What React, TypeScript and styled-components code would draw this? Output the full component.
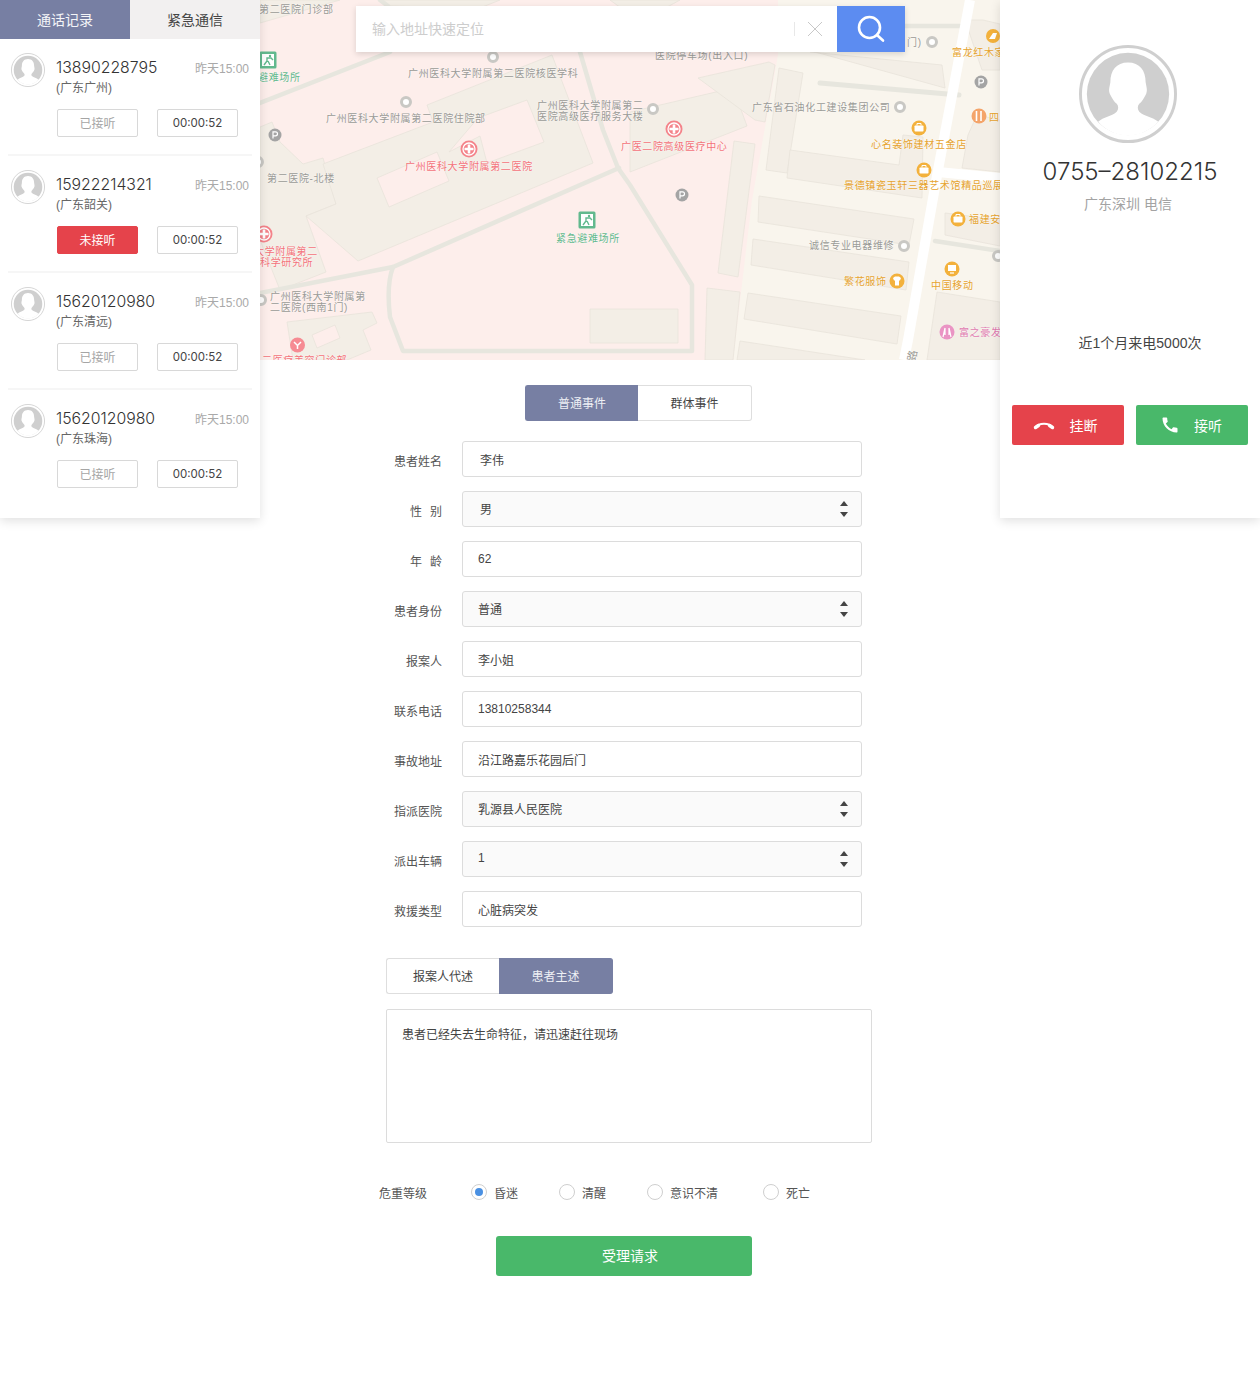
import React from "react";
import styled, { createGlobalStyle } from "styled-components";
import { MdCall } from "react-icons/md";

const Global = createGlobalStyle`
  html, body { margin: 0; padding: 0; background: #fff; }
  body { font-family: "Liberation Sans", "Noto Sans CJK SC", sans-serif; color: #444; }
  * { box-sizing: border-box; }
`;

const Page = styled.div`
  width: 1260px;
  min-height: 1380px;
  display: grid;
  grid-template-columns: 260px 740px 260px;
  align-items: start;
`;

const Panel = styled.aside`
  position: relative;
  z-index: 2;
  height: 518px;
  background: #fff;
  box-shadow: 0 3px 10px rgba(0, 0, 0, 0.12);
`;

const PanelTabs = styled.div`
  display: grid;
  grid-template-columns: 130px 130px;
  height: 39px;
`;

const PanelTab = styled.div<{ $active?: boolean }>`
  display: flex;
  align-items: center;
  justify-content: center;
  padding-bottom: 2px;
  font-size: 14px;
  color: ${(p) => (p.$active ? "#f4f5f8" : "#444")};
  background: ${(p) => (p.$active ? "#777fa3" : "#f2f0f0")};
`;

const CallRow = styled.div`
  height: 117px;
  margin: 0 8px;
  padding: 14px 3px 0 3px;
  border-bottom: 2px solid #f6f6f6;
  &:last-child { border-bottom: 0; }
`;

const CallTop = styled.div`
  display: flex;
  gap: 11px;
`;

const CallInfo = styled.div`
  flex: 1;
`;

const CallHead = styled.div`
  display: flex;
  justify-content: space-between;
  align-items: center;
  height: 28px;
`;

const Phone = styled.span`
  font-family: Inter, "Liberation Sans", sans-serif;
  font-weight: 300;
  font-size: 15.8px;
  color: #333;
`;

const When = styled.span`
  font-size: 12px;
  color: #a9a9a9;
`;

const Region = styled.div`
  font-size: 12px;
  line-height: 14px;
  color: #666;
`;

const CallButtons = styled.div`
  display: flex;
  gap: 19px;
  margin: 14px 0 0 46px;
`;

const Chip = styled.div<{ $tone?: "muted" | "alert" }>`
  width: 81px;
  height: 28px;
  display: flex;
  align-items: center;
  justify-content: center;
  padding-bottom: 1px;
  font-size: 12px;
  border-radius: 2px;
  border: 1px solid ${(p) => (p.$tone === "alert" ? "#e5434b" : "#d8d8d8")};
  background: ${(p) => (p.$tone === "alert" ? "#e5434b" : "#fff")};
  color: ${(p) => (p.$tone === "alert" ? "#fff" : p.$tone === "muted" ? "#a5a5a5" : "#444")};
`;

const TimerChip = styled(Chip)`
  font-family: Inter, "Liberation Sans", sans-serif;
  font-size: 11.5px;
`;

const AvatarSvg = styled.svg<{ $size: number; $shift?: number }>`
  display: block;
  flex: none;
  width: ${(p) => p.$size}px;
  height: ${(p) => p.$size}px;
  margin-right: ${(p) => p.$shift ?? 0}px;
`;

function Avatar({ size, ring, shift }: { size: number; ring: number; shift?: number }) {
  return (
    <AvatarSvg $size={size} $shift={shift} viewBox="0 0 100 100">
      <circle cx="50" cy="50" r={50 - ring / 2} fill="#fff" stroke="#cfcfcf" strokeWidth={ring} />
      <circle cx="50" cy="50" r="42" fill="#cfcfcf" />
      <path
        fill="#fff"
        d="M50 17.8C38 17.8 32 26 32 38C31 44 30 46 31.5 50C34 55 36 58 38.5 60C40.5 62 40.5 66 38.5 68C33 73 25 73 19.5 78.4C27 87 38 92.5 50 92.5C62 92.5 73 87 81 78.4C75 73 67 73 61.5 68C59.5 66 59.5 62 61.5 60C64 58 66 55 68.5 50C70 46 69 44 68 38C68 26 62 17.8 50 17.8Z"
      />
    </AvatarSvg>
  );
}

const Center = styled.main`
  min-width: 0;
`;

const MapCanvas = styled.div`
  position: relative;
  height: 360px;
  overflow: hidden;
  background: #fdeeeb;
`;

const MapArt = styled.svg`
  position: absolute;
  inset: 0;
  width: 740px;
  height: 360px;
  filter: blur(0.3px);
`;

const MapLabel = styled.span<{ $x: number; $y: number; $c: string }>`
  position: absolute;
  left: ${(p) => p.$x - 260}px;
  top: ${(p) => p.$y - 5}px;
  font-size: 10px;
  line-height: 11px;
  letter-spacing: 0.65px;
  white-space: pre;
  color: ${(p) => p.$c};
  text-shadow: 0 0 2px #fff;
`;

const VerticalLabel = styled(MapLabel)`
  font-size: 11px;
  transform: rotate(-80deg);
`;

const SearchBar = styled.div`
  position: absolute;
  left: 96px;
  top: 6px;
  width: 549px;
  height: 46px;
  display: flex;
  align-items: center;
  background: #fff;
  box-shadow: 0 2px 6px rgba(0, 0, 0, 0.14);
`;

const SearchHint = styled.div`
  flex: 1;
  padding: 0 0 2px 16px;
  font-size: 14px;
  color: #cdcdcd;
`;

const SearchDivider = styled.i`
  width: 1px;
  height: 14px;
  background: #e8e8e8;
`;

const ClearIcon = styled.svg`
  width: 16px;
  height: 16px;
  margin: 0 14px 0 12px;
`;

const SearchBtn = styled.div`
  width: 68px;
  height: 46px;
  display: flex;
  align-items: center;
  justify-content: center;
  background: #5c8cf1;
`;

const SearchGlyph = styled.svg`
  width: 28px;
  height: 28px;
`;

const EventTabs = styled.div<{ $left: number }>`
  display: flex;
  width: 227px;
  height: 36px;
  margin-left: ${(p) => p.$left}px;
`;

const EventTab = styled.div<{ $active?: boolean; $side: "l" | "r" }>`
  width: ${(p) => (p.$side === "l" ? 113 : 114)}px;
  display: flex;
  align-items: center;
  justify-content: center;
  padding-bottom: 2px;
  font-size: 12px;
  background: ${(p) => (p.$active ? "#777fa3" : "#fff")};
  color: ${(p) => (p.$active ? "#eef0f5" : "#444")};
  border: 1px solid ${(p) => (p.$active ? "#777fa3" : "#dedede")};
  ${(p) => (p.$side === "l" ? "border-right: 0;" : "border-left: 0;")}
  border-radius: ${(p) => (p.$side === "l" ? "3px 0 0 3px" : "0 3px 3px 0")};
`;

const FormArea = styled.section`
  padding-top: 25px;
`;

const Rows = styled.div`
  display: flex;
  flex-direction: column;
  gap: 14px;
  margin: 20px 0 0 120px;
`;

const FormRow = styled.div`
  display: grid;
  grid-template-columns: 62px 400px;
  column-gap: 20px;
  align-items: center;
`;

const FieldLabel = styled.label`
  text-align: right;
  font-size: 12px;
  word-spacing: 0.7px;
  padding-top: 2px;
  color: #555;
  white-space: pre;
`;

const Field = styled.div<{ $select?: boolean; $inset?: boolean }>`
  position: relative;
  height: 36px;
  display: flex;
  align-items: center;
  padding-left: ${(p) => (p.$inset ? 17 : 15)}px;
  padding-bottom: ${(p) => (p.$select ? 2 : 0)}px;
  font-size: 12px;
  color: #444;
  border: 1px solid #dcdcdc;
  border-radius: 3px;
  background: ${(p) => (p.$select ? "#fafafa" : "#fff")};
`;

const Updown = styled.span`
  position: absolute;
  right: 12px;
  top: 9px;
  width: 9px;
  height: 16px;
  &::before, &::after {
    content: "";
    position: absolute;
    left: 0;
    border-left: 4.5px solid transparent;
    border-right: 4.5px solid transparent;
  }
  &::before { top: 0; border-bottom: 5px solid #444; }
  &::after { bottom: 0; border-top: 5px solid #444; }
`;

const NoteBlock = styled.div`
  margin: 31px 0 0 126px;
`;

const NoteBox = styled.div`
  width: 486px;
  height: 134px;
  margin-top: 15px;
  padding: 16px 15px;
  font-size: 12px;
  line-height: 18px;
  color: #444;
  border: 1px solid #dcdcdc;
  border-radius: 2px;
`;

const Severity = styled.div`
  display: flex;
  align-items: center;
  margin: 40px 0 0 119px;
  height: 18px;
  font-size: 12px;
  color: #555;
`;

const SeverityTitle = styled.span`
  width: 92px;
`;

const RadioItem = styled.span<{ $w: number }>`
  display: flex;
  align-items: center;
  gap: 7px;
  width: ${(p) => p.$w}px;
`;

const RadioDot = styled.i<{ $on?: boolean }>`
  position: relative;
  width: 16px;
  height: 16px;
  border-radius: 50%;
  border: 1px solid #cfcfcf;
  background: #fff;
  ${(p) =>
    p.$on
      ? `&::after { content: ""; position: absolute; left: 3px; top: 3px; width: 8px; height: 8px; border-radius: 50%; background: #4a90e2; }`
      : ""}
`;

const SubmitBtn = styled.div`
  width: 256px;
  height: 40px;
  margin: 35px 0 0 236px;
  padding: 0 0 2px 12px;
  display: flex;
  align-items: center;
  justify-content: center;
  font-size: 14px;
  color: #fff;
  background: #49b86a;
  border-radius: 3px;
`;

const RightBody = styled.div`
  display: flex;
  flex-direction: column;
  align-items: center;
  padding-top: 45px;
`;

const BigNumber = styled.div`
  margin-top: 12px;
  font-family: Inter, "Liberation Sans", sans-serif;
  font-weight: 300;
  font-size: 24px;
  line-height: 34px;
  color: #333;
`;

const Carrier = styled.div`
  margin: 5px 4px 0 0;
  font-size: 14px;
  line-height: 20px;
  color: #a3a3a3;
`;

const Frequency = styled.div`
  margin: 119px 0 0 20px;
  font-size: 14px;
  line-height: 20px;
  color: #444;
`;

const CallActions = styled.div`
  display: grid;
  grid-template-columns: 112px 112px;
  gap: 12px;
  margin-top: 52px;
`;

const CallAction = styled.div<{ $kind: "end" | "accept" }>`
  height: 40px;
  display: flex;
  align-items: center;
  justify-content: center;
  gap: ${(p) => (p.$kind === "end" ? 15 : 14)}px;
  padding-right: ${(p) => (p.$kind === "end" ? 6 : 2)}px;
  font-size: 14px;
  color: #fff;
  border-radius: 2px;
  background: ${(p) => (p.$kind === "end" ? "#e5434b" : "#49b86a")};
`;

const HangUpGlyph = styled.svg`
  width: 22px;
  height: 10px;
`;

const calls = [
  { phone: "13890228795", region: "(广东广州)", state: "已接听" },
  { phone: "15922214321", region: "(广东韶关)", state: "未接听", missed: true },
  { phone: "15620120980", region: "(广东清远)", state: "已接听" },
  { phone: "15620120980", region: "(广东珠海)", state: "已接听" },
];

const fields = [
  { label: "患者姓名", value: "李伟", inset: true },
  { label: "性  别", value: "男", select: true, inset: true },
  { label: "年  龄", value: "62" },
  { label: "患者身份", value: "普通", select: true },
  { label: "报案人", value: "李小姐" },
  { label: "联系电话", value: "13810258344" },
  { label: "事故地址", value: "沿江路嘉乐花园后门" },
  { label: "指派医院", value: "乳源县人民医院", select: true },
  { label: "派出车辆", value: "1", select: true },
  { label: "救援类型", value: "心脏病突发" },
];

const G = "#9a9a96";
const R = "#f4727a";
const Gn = "#63b98d";
const O = "#e6a32e";
const Pk = "#e07ab0";

const labels: [string, number, number, string][] = [
  ["第二医院门诊部", 259, 9, G],
  ["避难场所", 258, 77, Gn],
  ["广州医科大学附属第二医院核医学科", 408, 73, G],
  ["广州医科大学附属第二医院住院部", 326, 118, G],
  ["广州医科大学附属第二\n医院高级医疗服务大楼", 537, 105, G],
  ["广州医科大学附属第二医院", 405, 166, R],
  ["第二医院-北楼", 267, 178, G],
  ["紧急避难场所", 556, 238, Gn],
  ["大学附属第二", 254, 251, R],
  ["科学研究所", 260, 262, R],
  ["广州医科大学附属第\n二医院(西南1门)", 270, 296, G],
  ["二医疗美容门诊部", 262, 360, R],
  ["医院停车场(出入口)", 655, 55, G],
  ["广东省石油化工建设集团公司", 752, 107, G],
  ["广医二院高级医疗中心", 621, 146, R],
  ["心名装饰建材五金店", 871, 144, O],
  ["景德镇瓷玉轩三器艺术馆精品巡展", 844, 185, O],
  ["福建安", 969, 219, O],
  ["诚信专业电器维修", 809, 245, G],
  ["繁花服饰", 844, 281, O],
  ["中国移动", 931, 285, O],
  ["富之豪发", 959, 332, Pk],
  ["富龙红木家", 952, 52, O],
  ["四", 989, 117, O],
  ["门)", 907, 42, G],
];

const blocks = [
  "260,23 340,0 260,0",
  "380,0 500,0 480,8 390,6",
  "260,127 272,122 280,142 303,164 323,158 336,204 306,216 326,272 280,290 260,240",
  "323,164 433,122 427,105 552,55 593,163 358,261 306,216 336,204",
  "287,322 372,312 377,323 363,330 371,350 347,360 293,360",
  "610,0 640,22 680,0",
  "630,112 733,88 747,126 630,172",
  "698,78 769,62 775,65 765,122 755,120",
  "779,68 803,73 787,173 766,170",
  "734,141 755,144 738,277 718,273",
  "707,288 740,292 733,360 705,360",
  "590,309 678,309 678,343 590,343",
  "808,50 945,88 942,65 810,52",
  "903,135 923,137 922,198 787,178 790,150 899,165",
  "759,196 914,219 909,245 758,222",
  "753,239 909,262 906,290 751,265",
  "748,293 901,316 897,344 744,319",
  "740,341 865,360 737,360",
  "965,20 983,20 1000,24 1000,70 982,70",
  "968,135 977,115 1000,120 1000,172 962,168",
  "945,213 1000,220 1000,246 945,235",
  "937,292 1000,302 1000,360 927,360",
];

const lightBeige = "M778 0H1000V360H733L752 200L778 55Z";

function Ring({ x, y }: { x: number; y: number }) {
  return <circle cx={x} cy={y} r="4.5" fill="#fff" stroke="#c9c8c4" strokeWidth="3" />;
}

function Park({ x, y }: { x: number; y: number }) {
  return (
    <g>
      <circle cx={x} cy={y} r="6.5" fill="#a4a4a4" />
      <path
        d={`M${x - 2} ${y + 3.5}V${y - 3.2}H${x + 0.5}a2 2 0 0 1 0 4H${x - 2}`}
        fill="none"
        stroke="#fff"
        strokeWidth="1.2"
      />
    </g>
  );
}

function Hospital({ x, y }: { x: number; y: number }) {
  return (
    <g>
      <circle cx={x} cy={y} r="8.5" fill="#f4838a" />
      <circle cx={x} cy={y} r="6" fill="none" stroke="#fff" strokeWidth="1.3" />
      <path d={`M${x - 4.5} ${y}H${x + 4.5}M${x} ${y - 4.5}V${y + 4.5}`} stroke="#fff" strokeWidth="2.6" />
    </g>
  );
}

function Exit({ x, y }: { x: number; y: number }) {
  return (
    <g>
      <rect x={x - 8.5} y={y - 8.5} width="17" height="17" rx="1.5" fill="#62b98e" />
      <rect x={x - 6} y={y - 6} width="12" height="12" fill="#fff" />
      <path
        d={`M${x - 4} ${y + 5}L${x - 1} ${y + 1}L${x - 1} ${y - 2}L${x + 3} ${y - 2}L${x + 5} ${y}M${x} ${y + 1}L${x + 2} ${y + 5}`}
        fill="none"
        stroke="#62b98e"
        strokeWidth="1.4"
      />
      <circle cx={x + 2} cy={y - 4} r="1.2" fill="#62b98e" />
    </g>
  );
}

function Shop({ x, y }: { x: number; y: number }) {
  return (
    <g>
      <circle cx={x} cy={y} r="7.5" fill="#f3b13c" />
      <rect x={x - 4.5} y={y - 2.5} width="9" height="6" rx="0.8" fill="#fff" />
      <path d={`M${x - 2} ${y - 2.5}V${y - 4.5}H${x + 2}V${y - 2.5}`} fill="none" stroke="#fff" strokeWidth="1" />
    </g>
  );
}

function MapDrawing() {
  return (
    <MapArt viewBox="260 0 740 360">
      <rect x="260" y="0" width="740" height="360" fill="#fdeeeb" />
      <path d={lightBeige} fill="#f9f5ed" />
      {blocks.map((pts) => (
        <polygon key={pts} points={pts} fill="#f3eee6" stroke="#e8e3da" strokeWidth="0.8" />
      ))}
      <polygon points="377,178 437,152 449,181 389,207" fill="#fdeeeb" stroke="#e8e3da" strokeWidth="0.8" />
      <polygon points="478,118 527,100 544,142 487,163 480,136 449,152" fill="#fdeeeb" stroke="#e8e3da" strokeWidth="0.8" />
      <polygon points="312,335 335,325 340,338 317,348" fill="#fdeeeb" stroke="#e8e3da" strokeWidth="0.8" />
      <g fill="none" stroke="#e7e6de" strokeWidth="4.5" strokeLinejoin="round" strokeLinecap="round">
        <path d="M260 103L390 52" />
        <path d="M260 293L393 267L619 168" />
        <path d="M393 267C388 280 388 300 390 317L403 351H692V285L630 185L618 168L603 130L580 52" />
        <path d="M380 0L388 6" />
        <path d="M820 83L959 95" strokeWidth="5" />
        <path d="M905 26H960" />
        <path d="M935 241L1000 251" />
      </g>
      <g fill="none" stroke="#fff" strokeWidth="10">
        <path d="M970 0L938 170L908 340L904 360" />
        <path d="M938 172L1000 178" />
      </g>
      {[
        [493, 57],
        [406, 102],
        [261, 300],
        [653, 109],
        [900, 107],
        [932, 42],
        [904, 246],
        [998, 256],
        [258, 162],
      ].map(([x, y]) => (
        <Ring key={`${x}-${y}`} x={x} y={y} />
      ))}
      <Park x={275} y={135} />
      <Park x={682} y={195} />
      <Park x={981} y={82} />
      <Hospital x={469} y={149} />
      <Hospital x={264} y={234} />
      <Hospital x={674} y={129} />
      <circle cx="297.500" cy="345" r="7.5" fill="#f68b93" />
      <path d="M294 342l3.500 3.500 3.500-3.500M297.500 345v4" fill="none" stroke="#fff" strokeWidth="1.5" />
      <Exit x={587} y={220} />
      <Exit x={268} y={60} />
      <Shop x={919} y={128} />
      <Shop x={924} y={170} />
      <Shop x={958} y={219} />
      <circle cx="952" cy="269" r="7.5" fill="#f3b13c" />
      <rect x="948" y="265" width="8" height="6" fill="#fff" />
      <path d="M950 273H954" stroke="#fff" strokeWidth="1.2" />
      <circle cx="897" cy="281" r="7.500" fill="#f3b13c" />
      <path d="M893 278L895 276.500H899L901 278L900 280.500H899V285.500H895V280.500H894Z" fill="#fff" />
      <circle cx="993" cy="36" r="7" fill="#f3b13c" />
      <path d="M989 39L993 33L997 33L995 39Z" fill="#fff" />
      <circle cx="979" cy="116" r="7.500" fill="#f4a46a" />
      <path d="M976.500 111V121M981 111V121" stroke="#fff" strokeWidth="1.6" />
      <circle cx="947" cy="332" r="7.500" fill="#ea94c4" />
      <path d="M945 328L943 337M949 328L951 337M945 328V335M949 328V335" stroke="#fff" strokeWidth="1.2" fill="none" />
    </MapArt>
  );
}

export default function App() {
  return (
    <Page>
      <Global />
      <Panel>
        <PanelTabs>
          <PanelTab $active>通话记录</PanelTab>
          <PanelTab>紧急通信</PanelTab>
        </PanelTabs>
        {calls.map((c, i) => (
          <CallRow key={i}>
            <CallTop>
              <Avatar size={34} ring={2.5} />
              <CallInfo>
                <CallHead>
                  <Phone>{c.phone}</Phone>
                  <When>昨天15:00</When>
                </CallHead>
                <Region>{c.region}</Region>
              </CallInfo>
            </CallTop>
            <CallButtons>
              <Chip $tone={c.missed ? "alert" : "muted"}>{c.state}</Chip>
              <TimerChip>00:00:52</TimerChip>
            </CallButtons>
          </CallRow>
        ))}
      </Panel>

      <Center>
        <MapCanvas>
          <MapDrawing />
          {labels.map(([t, x, y, c]) => (
            <MapLabel key={t} $x={x} $y={y} $c={c}>
              {t}
            </MapLabel>
          ))}
          <VerticalLabel $x={907} $y={355} $c={G}>
            路
          </VerticalLabel>
          <SearchBar>
            <SearchHint>输入地址快速定位</SearchHint>
            <SearchDivider />
            <ClearIcon viewBox="0 0 16 16">
              <path d="M1 1L15 15M15 1L1 15" stroke="#c8c8c8" strokeWidth="1" />
            </ClearIcon>
            <SearchBtn>
              <SearchGlyph viewBox="0 0 28 28">
                <circle cx="12.500" cy="12.500" r="10.500" fill="none" stroke="#fff" strokeWidth="2.6" />
                <path d="M20 20L26 25.500" stroke="#fff" strokeWidth="2.6" strokeLinecap="round" />
              </SearchGlyph>
            </SearchBtn>
          </SearchBar>
        </MapCanvas>

        <FormArea>
          <EventTabs $left={265}>
            <EventTab $active $side="l">普通事件</EventTab>
            <EventTab $side="r">群体事件</EventTab>
          </EventTabs>
          <Rows>
            {fields.map((f) => (
              <FormRow key={f.label}>
                <FieldLabel>{f.label}</FieldLabel>
                <Field $select={f.select} $inset={f.inset}>
                  {f.value}
                  {f.select && <Updown />}
                </Field>
              </FormRow>
            ))}
          </Rows>
          <NoteBlock>
            <EventTabs $left={0}>
              <EventTab $side="l">报案人代述</EventTab>
              <EventTab $active $side="r">患者主述</EventTab>
            </EventTabs>
            <NoteBox>患者已经失去生命特征，请迅速赶往现场</NoteBox>
          </NoteBlock>
          <Severity>
            <SeverityTitle>危重等级</SeverityTitle>
            <RadioItem $w={88}><RadioDot $on />昏迷</RadioItem>
            <RadioItem $w={88}><RadioDot />清醒</RadioItem>
            <RadioItem $w={116}><RadioDot />意识不清</RadioItem>
            <RadioItem $w={60}><RadioDot />死亡</RadioItem>
          </Severity>
          <SubmitBtn>受理请求</SubmitBtn>
        </FormArea>
      </Center>

      <Panel>
        <RightBody>
          <Avatar size={98} ring={3} shift={4} />
          <BigNumber>0755–28102215</BigNumber>
          <Carrier>广东深圳 电信</Carrier>
          <Frequency>近1个月来电5000次</Frequency>
          <CallActions>
            <CallAction $kind="end">
              <HangUpGlyph viewBox="0 0 22 10">
                <path d="M2.500 7.500C6 2.500 16 2.500 19.500 7.500" fill="none" stroke="#fff" strokeWidth="2.2" strokeLinecap="round" />
                <path d="M2.500 7.500L5.500 5.500M19.500 7.500L16.500 5.500" stroke="#fff" strokeWidth="3.4" strokeLinecap="round" />
              </HangUpGlyph>
              挂断
            </CallAction>
            <CallAction $kind="accept">
              <MdCall size={20} />
              接听
            </CallAction>
          </CallActions>
        </RightBody>
      </Panel>
    </Page>
  );
}
